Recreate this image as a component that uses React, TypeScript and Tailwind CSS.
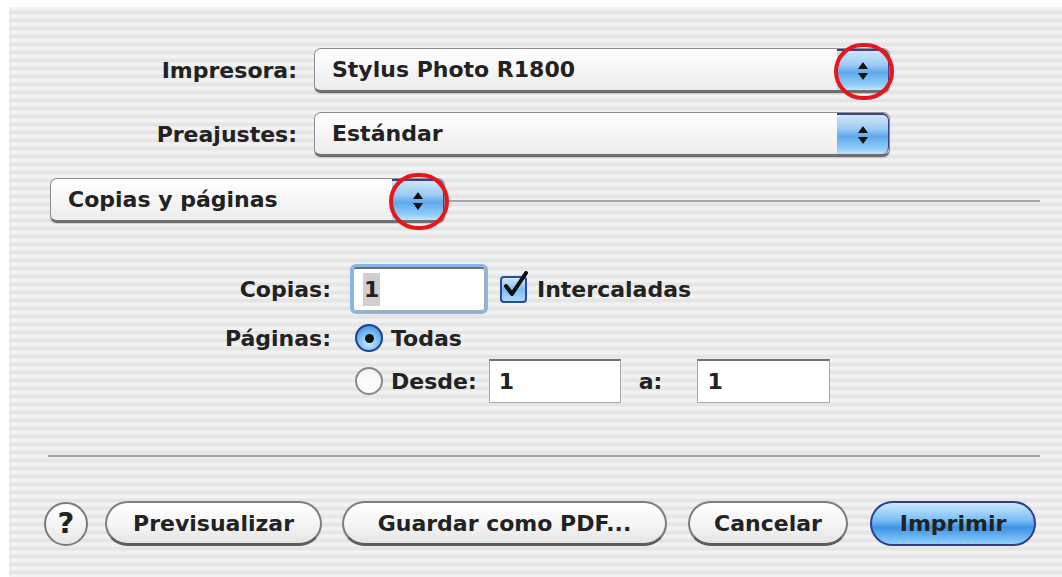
import React from "react";

const font = "font-['DejaVu_Sans',sans-serif] font-bold text-[22px] text-[#222222]";

const Stepper = ({ ring }: { ring?: boolean }) => (
  <div className="relative h-full w-[52px] shrink-0 rounded-r-[7px] border-t-2 border-r border-[#3d3f8f] bg-[linear-gradient(to_bottom,#cfe7fb_0%,#9ccbf3_35%,#5fa9ea_55%,#8ccbf8_85%,#bfe5ff_100%)] flex flex-col items-center justify-center gap-[4px]">
    <svg width="10" height="7" viewBox="0 0 10 7">
      <path d="M5 0 L10 7 L0 7 Z" fill="#111" />
    </svg>
    <svg width="10" height="7" viewBox="0 0 10 7">
      <path d="M0 0 L10 0 L5 7 Z" fill="#111" />
    </svg>
    {ring && (
      <div className="absolute -left-[3px] -top-[8px] h-[57px] w-[60px] rounded-full border-[4px] border-[#e8151b]" />
    )}
  </div>
);

const Popup = ({ label, width, ring }: { label: string; width: string; ring?: boolean }) => (
  <div
    className={`${width} h-[45px] flex rounded-[7px] border border-[#8d8d8d] border-b-[3px] border-b-[#6e6e6e] bg-[linear-gradient(to_bottom,#ffffff_0%,#f6f6f6_50%,#ececec_100%)] shadow-[0_1px_1px_rgba(0,0,0,0.15)]`}
  >
    <div className={`${font} flex-1 flex items-center pl-[17px]`}>{label}</div>
    <Stepper ring={ring} />
  </div>
);

const Field = ({ value, width, focused }: { value: string; width: string; focused?: boolean }) => (
  <div
    className={`${width} h-[44px] bg-white flex items-center pl-[9px] border border-[#a9a9a9] border-t-2 border-t-[#6f6f6f] ${
      focused ? "rounded-[3px] outline-[3px] outline-[#86b6ea] border-[#7a7a7a]" : ""
    }`}
  >
    <span className={`${font} ${focused ? "bg-[#cfcfcf] px-[1px]" : ""}`}>{value}</span>
  </div>
);

const Radio = ({ on }: { on?: boolean }) =>
  on ? (
    <div className="h-[28px] w-[28px] shrink-0 rounded-full border-2 border-[#23408f] bg-[radial-gradient(circle_at_50%_70%,#c9ecff_0%,#6fb7f1_55%,#2f7fd6_100%)] flex items-center justify-center">
      <div className="h-[9px] w-[9px] rounded-full bg-[#111]" />
    </div>
  ) : (
    <div className="h-[28px] w-[28px] shrink-0 rounded-full border-2 border-[#8a8a8a] bg-[linear-gradient(to_bottom,#f4f4f4,#ffffff)]" />
  );

const PillButton = ({ label, width, primary }: { label: string; width: string; primary?: boolean }) => (
  <div
    className={`${width} h-[45px] ${font} flex items-center justify-center rounded-full border-2 ${
      primary
        ? "border-[#2c3f91] bg-[linear-gradient(to_bottom,#cde9ff_0%,#7fc0f6_40%,#3d93e4_60%,#8fd0ff_100%)]"
        : "border-[#7d7d7d] border-b-[3px] border-b-[#5d5d5d] bg-[linear-gradient(to_bottom,#ffffff_0%,#f4f4f4_55%,#e4e4e4_100%)]"
    }`}
  >
    {label}
  </div>
);

export default function App() {
  return (
    <div className="w-[1062px] h-[577px] bg-white pt-[7px] pl-[9px] overflow-hidden">
      <div className="h-[570px] w-full pt-[41px] bg-[image:repeating-linear-gradient(to_bottom,#f2f2f2_0px,#f2f2f2_3px,#e5e5e5_4px,#e5e5e5_7px,#f2f2f2_8px)] flex flex-col">
        {/* printer + presets */}
        <div className="flex items-center">
          <div className={`${font} w-[288px] text-right`}>Impresora:</div>
          <div className="ml-[17px]">
            <Popup label="Stylus Photo R1800" width="w-[576px]" ring />
          </div>
        </div>
        <div className="flex items-center mt-[19px]">
          <div className={`${font} w-[288px] text-right`}>Preajustes:</div>
          <div className="ml-[17px]">
            <Popup label="Estándar" width="w-[576px]" />
          </div>
        </div>

        {/* pane selector */}
        <div className="flex items-center mt-[21px] ml-[41px] mr-[22px]">
          <Popup label="Copias y páginas" width="w-[395px]" ring />
          <div className="flex-1 h-[2px] bg-[#a5a5a5]" />
        </div>

        {/* copies */}
        <div className="flex items-center mt-[44px]">
          <div className={`${font} w-[322px] text-right`}>Copias:</div>
          <div className="ml-[22px]">
            <Field value="1" width="w-[132px]" focused />
          </div>
          <div className="relative ml-[15px] h-[27px] w-[27px] rounded-[4px] border-2 border-[#2d4a95] bg-[linear-gradient(to_bottom,#cfeaff_0%,#7dbcf2_50%,#a9dbff_100%)]">
            <svg className="absolute -top-[7px] left-[1px]" width="26" height="28" viewBox="0 0 26 28">
              <path d="M3 15 L9 23 L23 2" stroke="#0c0c0c" strokeWidth="4" fill="none" strokeLinecap="round" strokeLinejoin="round" />
            </svg>
          </div>
          <div className={`${font} ml-[10px]`}>Intercaladas</div>
        </div>

        {/* page range */}
        <div className="flex items-center mt-[13px] h-[28px]">
          <div className={`${font} w-[322px] text-right`}>Páginas:</div>
          <div className="ml-[24px]">
            <Radio on />
          </div>
          <div className={`${font} ml-[8px]`}>Todas</div>
        </div>
        <div className="flex items-center mt-[7px] h-[44px] pl-[346px]">
          <Radio />
          <div className={`${font} ml-[8px]`}>Desde:</div>
          <div className="ml-[12px]">
            <Field value="1" width="w-[132px]" />
          </div>
          <div className={`${font} ml-[18px]`}>a:</div>
          <div className="ml-[35px]">
            <Field value="1" width="w-[133px]" />
          </div>
        </div>

        <div className="mt-[52px] ml-[39px] mr-[22px] h-[2px] bg-[#a5a5a5]" />

        {/* actions */}
        <div className="flex items-center mt-[44px] ml-[35px]">
          <div className="h-[44px] w-[44px] rounded-full border-2 border-[#7a7a7a] bg-[linear-gradient(to_bottom,#ffffff,#e8e8e8)] flex items-center justify-center font-['DejaVu_Sans',sans-serif] font-bold text-[29px] text-[#222222] leading-none">
            ?
          </div>
          <div className="ml-[17px]">
            <PillButton label="Previsualizar" width="w-[217px]" />
          </div>
          <div className="ml-[20px]">
            <PillButton label="Guardar como PDF..." width="w-[325px]" />
          </div>
          <div className="ml-[21px]">
            <PillButton label="Cancelar" width="w-[160px]" />
          </div>
          <div className="ml-[22px]">
            <PillButton label="Imprimir" width="w-[166px]" primary />
          </div>
        </div>
      </div>
    </div>
  );
}
